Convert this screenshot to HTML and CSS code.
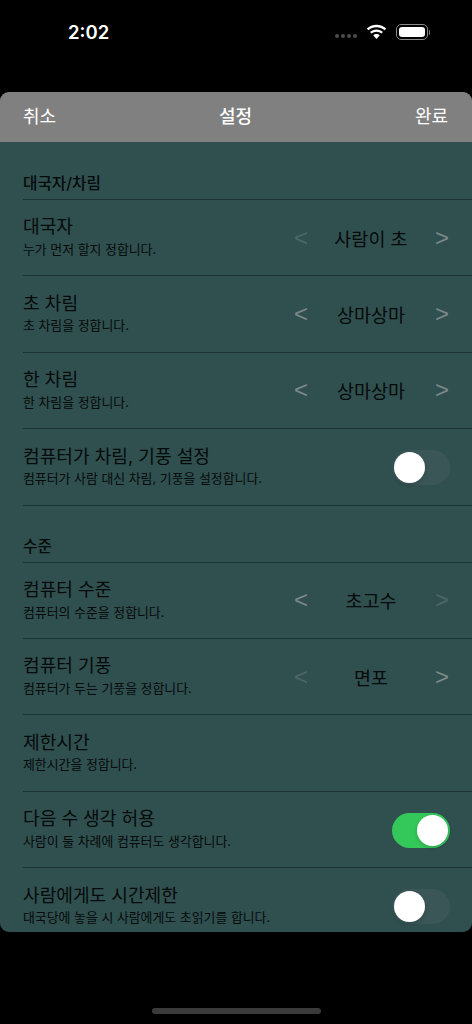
FILE: index.html
```html
<!DOCTYPE html>
<html lang="ko">
<head>
  <meta charset="UTF-8">
  <meta name="viewport" content="width=device-width, initial-scale=1.0">
  <title>설정</title>
  <link rel="stylesheet" href="styles.css">
</head>
<body>
  <div class="status-bar">
    <span class="clock">2:02</span>
    <div class="status-icons">
      <div class="signal-dots"><i></i><i></i><i></i><i></i></div>
      <svg class="wifi" width="23" height="16" viewBox="0 0 22 16" preserveAspectRatio="none">
        <path d="M11 3.2c3 0 5.7 1.2 7.7 3.1l1.6-1.7C17.900 2.300 14.600.8 11 .8S4.100 2.300 1.700 4.600l1.600 1.700C5.300 4.400 8 3.200 11 3.200z" fill="#fff"/>
        <path d="M11 7.800c1.800 0 3.400.7 4.600 1.800l1.600-1.700C15.600 6.400 13.400 5.400 11 5.400S6.400 6.400 4.800 7.900l1.600 1.700C7.600 8.500 9.200 7.800 11 7.800z" fill="#fff"/>
        <path d="M11 10c-1.200 0-2.300.5-3.100 1.200L11 15l3.100-3.800C13.300 10.500 12.200 10 11 10z" fill="#fff"/>
      </svg>
      <div class="battery"><div class="battery-level"></div></div>
      <div class="battery-cap"></div>
    </div>
  </div>

  <div class="sheet">
    <div class="nav">
      <span>취소</span>
      <span class="nav-title">설정</span>
      <span>완료</span>
    </div>
    <div class="content">
      <div class="section-title first">대국자/차림</div>
      <div class="row">
        <div class="labels"><div class="title">대국자</div><div class="desc">누가 먼저 할지 정합니다.</div></div>
        <div class="picker"><span class="arrow off">&lt;</span><span class="value">사람이 초</span><span class="arrow">&gt;</span></div>
      </div>
      <div class="row">
        <div class="labels"><div class="title">초 차림</div><div class="desc">초 차림을 정합니다.</div></div>
        <div class="picker"><span class="arrow">&lt;</span><span class="value">상마상마</span><span class="arrow">&gt;</span></div>
      </div>
      <div class="row">
        <div class="labels"><div class="title">한 차림</div><div class="desc">한 차림을 정합니다.</div></div>
        <div class="picker"><span class="arrow">&lt;</span><span class="value">상마상마</span><span class="arrow">&gt;</span></div>
      </div>
      <div class="row">
        <div class="labels"><div class="title">컴퓨터가 차림, 기풍 설정</div><div class="desc">컴퓨터가 사람 대신 차림, 기풍을 설정합니다.</div></div>
        <div class="switch"><div class="knob"></div></div>
      </div>

      <div class="section-title">수준</div>
      <div class="row">
        <div class="labels"><div class="title">컴퓨터 수준</div><div class="desc">컴퓨터의 수준을 정합니다.</div></div>
        <div class="picker"><span class="arrow">&lt;</span><span class="value">초고수</span><span class="arrow off">&gt;</span></div>
      </div>
      <div class="row">
        <div class="labels"><div class="title">컴퓨터 기풍</div><div class="desc">컴퓨터가 두는 기풍을 정합니다.</div></div>
        <div class="picker"><span class="arrow off">&lt;</span><span class="value">면포</span><span class="arrow">&gt;</span></div>
      </div>
      <div class="row">
        <div class="labels"><div class="title">제한시간</div><div class="desc">제한시간을 정합니다.</div></div>
      </div>
      <div class="row">
        <div class="labels"><div class="title">다음 수 생각 허용</div><div class="desc">사람이 둘 차례에 컴퓨터도 생각합니다.</div></div>
        <div class="switch on"><div class="knob"></div></div>
      </div>
      <div class="row">
        <div class="labels"><div class="title">사람에게도 시간제한</div><div class="desc">대국당에 놓을 시 사람에게도 초읽기를 합니다.</div></div>
        <div class="switch"><div class="knob"></div></div>
      </div>
    </div>
  </div>

  <div class="home-bar"></div>
</body>
</html>
```

FILE: styles.css
```css
* {
  box-sizing: border-box;
}
body {
  margin: 0;
  height: 1024px;
  background: #000;
  overflow: hidden;
  font-family: "Inter", "Noto Sans CJK KR", sans-serif;
  color: #050a0a;
  display: flex;
  flex-direction: column;
}
/* Status bar */
.status-bar {
  height: 92px;
  padding: 21px 42px 0 68px;
  display: flex;
  justify-content: space-between;
  align-items: flex-start;
  color: #fff;
}
.clock {
  font-size: 18.500px;
  font-weight: 600;
  line-height: 23px;
}
.status-icons {
  display: flex;
  align-items: center;
  height: 22px;
}
.signal-dots {
  display: flex;
  gap: 2px;
  margin-right: 8px;
  margin-top: 7px;
}
.signal-dots i {
  width: 4px;
  height: 4px;
  border-radius: 50%;
  background: #4c4c4c;
}
.wifi {
  margin-right: 8px;
}
.battery {
  width: 32px;
  height: 16px;
  border: 1px solid #8a8a8a;
  border-radius: 5px;
  padding: 2px;
}
.battery-level {
  height: 100%;
  background: #fff;
  border-radius: 3px;
}
.battery-cap {
  width: 1.500px;
  height: 5px;
  margin-left: 1px;
  background: #777;
  border-radius: 0 2px 2px 0;
}
/* Sheet */
.sheet {
  height: 840px;
  border-radius: 9px;
  overflow: hidden;
  background: #304f4f;
}
.nav {
  height: 50px;
  padding: 0 24px 0 23px;
  background: #808080;
  display: flex;
  justify-content: space-between;
  align-items: center;
  color: #fff;
  font-size: 18px;
  line-height: 50px;
}
.nav-title {
  font-weight: 500;
}
.section-title {
  margin-left: 23px;
  height: 57px;
  padding-top: 29px;
  font-size: 15.700px;
  font-weight: 500;
  line-height: 24px;
  border-bottom: 1px solid #1b3234;
}
.section-title.first {
  height: 58px;
  padding-top: 30px;
}
.row {
  margin-left: 23px;
  height: 76.400px;
  padding-right: 22px;
  border-bottom: 1px solid #1b3234;
  display: flex;
  align-items: center;
  justify-content: space-between;
}
.labels {
  padding-bottom: 2px;
}
.title {
  font-size: 18.100px;
  line-height: 24px;
  margin-bottom: 2.500px;
}
.desc {
  font-size: 12.900px;
  line-height: 18px;
}
.picker {
  width: 156px;
  padding-right: 1px;
  display: flex;
  align-items: center;
  justify-content: space-between;
  margin-top: 4px;
}
.value {
  flex: 1;
  margin-right: 1px;
  margin-bottom: 2px;
  text-align: center;
  font-size: 18.500px;
  line-height: 24px;
}
.arrow {
  width: 14px;
  margin-bottom: 4px;
  font-size: 24px;
  line-height: 24px;
  color: #7b8889;
  font-family: "Liberation Sans", sans-serif;
}
.arrow.off {
  color: #4d6667;
}
/* Toggle */
.switch {
  width: 58px;
  height: 35px;
  padding: 2px;
  border-radius: 18px;
  background: #3a5657;
  display: flex;
  justify-content: flex-start;
  margin-top: 2px;
}
.switch.on {
  background: #34c759;
  justify-content: flex-end;
}
.knob {
  width: 31px;
  height: 31px;
  border-radius: 50%;
  background: #fff;
  box-shadow: 0 2px 4px rgba(0,0,0,0.15);
}
/* Home indicator */
.home-bar {
  width: 169px;
  height: 6px;
  margin: 76px auto 0;
  border-radius: 3px;
  background: #3a3a3a;
}
```
